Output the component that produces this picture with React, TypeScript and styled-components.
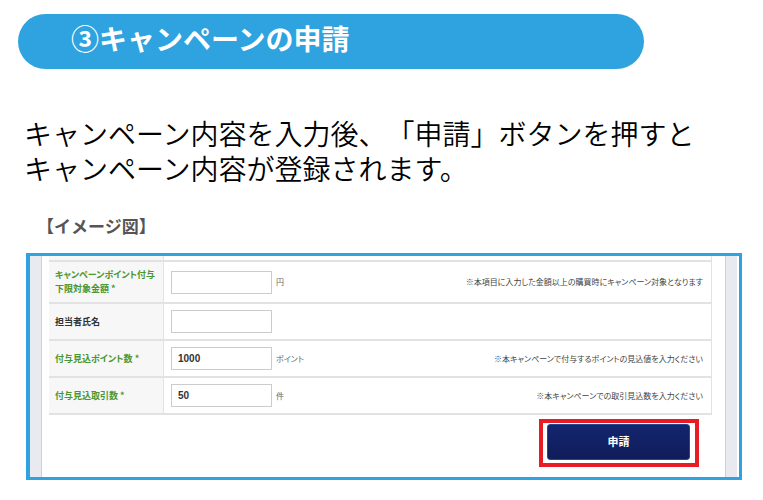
import React from "react";
import styled, { createGlobalStyle } from "styled-components";

const GlobalStyle = createGlobalStyle`
  *, *::before, *::after { box-sizing: border-box; }
  body {
    margin: 0;
    background: #fff;
    color: #000;
    font-family: "Noto Sans CJK JP", sans-serif;
    text-spacing-trim: space-all;
  }
`;

const Page = styled.main`
  padding: 14px 21px 16px 18px;
`;

const Banner = styled.h1`
  margin: 0 98px 0 0;
  height: 55px;
  padding: 0 54px 8px 53px;
  display: flex;
  align-items: center;
  border-radius: 28px;
  background: #2ea3df;
  color: #fff;
  font-size: 28px;
  line-height: 34px;
  font-weight: 700;
`;

const Lead = styled.p`
  margin: 47px 0 0 6px;
  font-size: 28px;
  line-height: 35px;
  font-weight: 350;
`;

const Caption = styled.h2`
  margin: 28px 0 0 19px;
  color: #555;
  font-size: 17px;
  line-height: 24px;
  font-weight: 700;
`;

const Frame = styled.section`
  margin: 15px 0 0 8px;
  padding: 0 2px 0 0;
  border: 3px solid #2ea3df;
  border-left-width: 4px;
`;

const Backdrop = styled.div`
  padding: 0 11px;
  background: #e9eaf0;
`;

const Sheet = styled.form`
  padding: 0 13px 10px 7px;
  border: solid #d0d0d0;
  border-width: 0 1px;
  background: #fff;
`;

const FieldTable = styled.table`
  width: 100%;
  border-collapse: separate;
  border-spacing: 0;
  font-size: 9px;
  line-height: 14px;
  font-feature-settings: "palt";
`;

const Row = styled.tr<{ $height: number }>`
  height: ${(p) => p.$height}px;
`;

const LabelCell = styled.th<{ $required?: boolean }>`
  width: 115px;
  padding: 0 0 0 6px;
  border: solid #e2e2e2;
  border-width: 0 1px 2px 0;
  background: #f7f7f7;
  color: ${(p) => (p.$required ? "#4a9632" : "#333")};
  font-weight: 700;
  text-align: left;
`;

const FieldCell = styled.td`
  padding: 0 8px 0 7px;
  border: solid #e2e2e2;
  border-width: 0 1px 2px 0;
`;

const Field = styled.div`
  display: flex;
  align-items: center;
  gap: 4px;
`;

const TextBox = styled.input`
  width: 101px;
  height: 23px;
  padding: 0 6px;
  border: 1px solid #ccc;
  border-radius: 0;
  background: #fff;
  color: #333;
  font: 700 10px "Liberation Sans", sans-serif;
`;

const Unit = styled.span`
  color: #666;
  font-size: 8px;
`;

const Hint = styled.span`
  margin-left: auto;
  color: #444;
  font-size: 8px;
`;

const Actions = styled.div`
  display: flex;
  justify-content: flex-end;
  margin-top: 4px;
  padding-right: 13px;
`;

const Highlight = styled.div`
  padding: 1px 5px 3px 4px;
  border: 4px solid #e81c24;
`;

const SubmitButton = styled.button`
  display: block;
  width: 143px;
  height: 36px;
  padding: 0 0 2px;
  border: 1px solid #1d4a94;
  border-radius: 3px;
  background: linear-gradient(#14256f, #101d5a);
  color: #fff;
  font: 700 11px "Noto Sans CJK JP", sans-serif;
`;

type FieldData = {
  id: string;
  label: React.ReactNode;
  required?: boolean;
  value: string;
  unit?: string;
  hint?: string;
  height: number;
};

const fields: FieldData[] = [
  {
    id: "minimum",
    label: <>キャンペーンポイント付与<br />下限対象金額 *</>,
    required: true,
    value: "",
    unit: "円",
    hint: "※本項目に入力した金額以上の購買時にキャンペーン対象となります",
    height: 42,
  },
  { id: "person", label: "担当者氏名", value: "", height: 37 },
  {
    id: "points",
    label: "付与見込ポイント数 *",
    required: true,
    value: "1000",
    unit: "ポイント",
    hint: "※本キャンペーンで付与するポイントの見込値を入力ください",
    height: 37,
  },
  {
    id: "deals",
    label: "付与見込取引数 *",
    required: true,
    value: "50",
    unit: "件",
    hint: "※本キャンペーンでの取引見込数を入力ください",
    height: 37,
  },
];

export default function App() {
  return (
    <>
      <GlobalStyle />
      <Page lang="ja">
        <Banner>③キャンペーンの申請</Banner>
        <Lead>
          キャンペーン内容を入力後、「申請」ボタンを押すと
          <br />
          キャンペーン内容が登録されます。
        </Lead>
        <Caption>【イメージ図】</Caption>
        <Frame>
          <Backdrop>
            <Sheet onSubmit={(e) => e.preventDefault()}>
              <FieldTable>
                <tbody>
                  <Row $height={6} aria-hidden="true">
                    <LabelCell as="td" />
                    <FieldCell />
                  </Row>
                  {fields.map((f) => (
                    <Row key={f.id} $height={f.height}>
                      <LabelCell scope="row" $required={f.required}>
                        <label htmlFor={f.id}>{f.label}</label>
                      </LabelCell>
                      <FieldCell>
                        <Field>
                          <TextBox id={f.id} type="text" defaultValue={f.value} />
                          {f.unit && <Unit>{f.unit}</Unit>}
                          {f.hint && <Hint>{f.hint}</Hint>}
                        </Field>
                      </FieldCell>
                    </Row>
                  ))}
                </tbody>
              </FieldTable>
              <Actions>
                <Highlight>
                  <SubmitButton type="submit">申請</SubmitButton>
                </Highlight>
              </Actions>
            </Sheet>
          </Backdrop>
        </Frame>
      </Page>
    </>
  );
}
